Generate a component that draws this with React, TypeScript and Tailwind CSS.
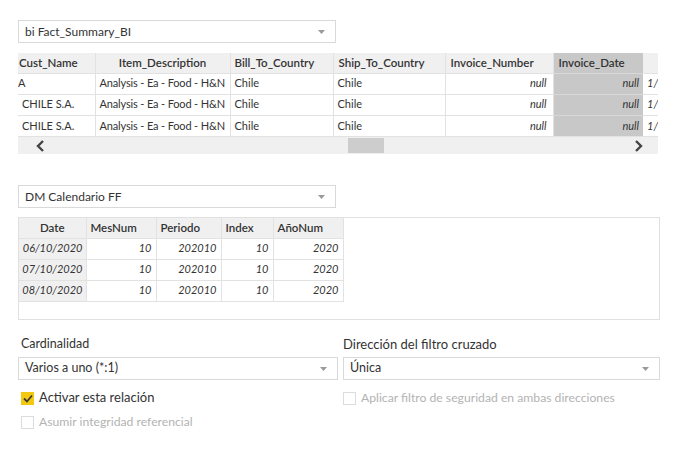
const font = { fontFamily: "Lato, 'Noto Sans', sans-serif" };

const Caret = () => (
  <svg width="7" height="4" viewBox="0 0 7 4" className="shrink-0">
    <path d="M0 0 L7 0 L3.5 4 Z" fill="#9a9a9a" />
  </svg>
);

const Select = ({ value, className }: { value: string; className: string }) => (
  <div
    className={`h-[23px] border border-[#d9d9d9] bg-white flex items-center justify-between pl-[6px] pr-[10px] text-[#333] ${className}`}
  >
    <span>{value}</span>
    <Caret />
  </div>
);

const Check = ({ checked, disabled, label }: { checked?: boolean; disabled?: boolean; label: string }) => (
  <div className="flex items-center gap-[5px] h-[16px]">
    {checked ? (
      <div className="w-[13px] h-[13px] bg-[#f2c811] flex items-center justify-center">
        <svg width="10" height="9" viewBox="0 0 10 9">
          <path d="M1 4.5 L4 7.5 L9 1.5" stroke="#3a3a3a" strokeWidth="1.8" fill="none" />
        </svg>
      </div>
    ) : (
      <div className="w-[13px] h-[13px] border border-[#dcdcdc] bg-white" />
    )}
    <span className={`${disabled ? "text-[#b3b3b3] text-[12.2px]" : "text-[#333] text-[13px]"}`}>{label}</span>
  </div>
);

const factCols = [77, 135, 103, 112, 108, 90, 15];

const factRows = [
  ["A", "Analysis - Ea - Food - H&N", "Chile", "Chile", "null", "null", "1/"],
  ["CHILE S.A.", "Analysis - Ea - Food - H&N", "Chile", "Chile", "null", "null", "1/"],
  ["CHILE S.A.", "Analysis - Ea - Food - H&N", "Chile", "Chile", "null", "null", "1/"],
];

const th = "bg-[#f0f0f0] border-r border-[#e2e2e2] font-semibold whitespace-nowrap overflow-hidden text-[11.5px]";

const FactTable = () => (
  <div className="w-[640px] overflow-hidden">
    <table className="w-[640px] table-fixed border-collapse text-[11px] text-[#333]">
      <colgroup>
        {factCols.map((w, i) => (
          <col key={i} style={{ width: w }} />
        ))}
      </colgroup>
      <thead>
        <tr className="h-[20px]">
          <th className={`${th} text-left pl-[1px]`}>Cust_Name</th>
          <th className={`${th} text-center`}>Item_Description</th>
          <th className={`${th} text-left pl-[4px]`}>Bill_To_Country</th>
          <th className={`${th} text-left pl-[5px]`}>Ship_To_Country</th>
          <th className={`${th} text-left pl-[5px]`}>Invoice_Number</th>
          <th className="bg-[#c8c8c8] font-semibold text-[11.5px] text-left pl-[5px] whitespace-nowrap">Invoice_Date</th>
          <th className="bg-[#f0f0f0]" />
        </tr>
      </thead>
      <tbody>
        {factRows.map((r, i) => (
          <tr key={i} className="h-[21px] border-t border-[#e2e2e2]">
            <td className={`border-r border-[#e2e2e2] whitespace-nowrap overflow-hidden ${i === 0 ? "pl-0" : "pl-[4px]"}`}>
              {r[0]}
            </td>
            <td className="border-r border-[#e2e2e2] pl-[4px] whitespace-nowrap overflow-hidden tracking-[-0.15px]">{r[1]}</td>
            <td className="border-r border-[#e2e2e2] pl-[4px]">{r[2]}</td>
            <td className="border-r border-[#e2e2e2] pl-[4px]">{r[3]}</td>
            <td className="border-r border-[#e2e2e2] pr-[6px] text-right italic">{r[4]}</td>
            <td className="bg-[#c8c8c8] pr-[4px] text-right italic border-t border-[#d8d8d8]">{r[5]}</td>
            <td className="pl-[4px] italic whitespace-nowrap overflow-hidden">{r[6]}</td>
          </tr>
        ))}
      </tbody>
    </table>
    <div className="h-[18px] bg-[#f0f0f0] border-t border-[#e2e2e2] flex items-center pl-[17px] pr-[14px]">
      <svg width="10" height="12" viewBox="0 0 10 12">
        <path d="M8 1 L3 6 L8 11" stroke="#444" strokeWidth="2.4" fill="none" />
      </svg>
      <div className="ml-[303px] w-[36px] h-[15px] bg-[#cdcdcd]" />
      <div className="flex-1" />
      <svg width="10" height="12" viewBox="0 0 10 12">
        <path d="M2 1 L7 6 L2 11" stroke="#444" strokeWidth="2.4" fill="none" />
      </svg>
    </div>
  </div>
);

const calCols = [
  { name: "Date", w: 67 },
  { name: "MesNum", w: 70 },
  { name: "Periodo", w: 65 },
  { name: "Index", w: 52 },
  { name: "AñoNum", w: 70 },
];

const calRows = [
  ["06/10/2020", "10", "202010", "10", "2020"],
  ["07/10/2020", "10", "202010", "10", "2020"],
  ["08/10/2020", "10", "202010", "10", "2020"],
];

const CalTable = () => (
  <div className="w-[642px] h-[103px] border border-[#e0e0e0]">
    <table className="w-[324px] table-fixed border-collapse text-[11px] text-[#333]">
      <colgroup>
        {calCols.map((c, i) => (
          <col key={i} style={{ width: c.w }} />
        ))}
      </colgroup>
      <thead>
        <tr className="h-[20px]">
          {calCols.map((c, i) => (
            <th key={i} className={`${th} ${i === 0 ? "text-center" : "text-left pl-[4px]"}`}>
              {c.name}
            </th>
          ))}
        </tr>
      </thead>
      <tbody>
        {calRows.map((r, i) => (
          <tr key={i} className="h-[21px] border-t border-b border-[#e2e2e2]">
            <td className="bg-[#f0f0f0] border-r border-[#e2e2e2] italic text-right pr-[3px]">{r[0]}</td>
            {r.slice(1).map((v, j) => (
              <td key={j} className="border-r border-[#e2e2e2] italic text-right pr-[4px]">
                {v}
              </td>
            ))}
          </tr>
        ))}
      </tbody>
    </table>
  </div>
);

export default function App() {
  return (
    <div className="w-[675px] h-[450px] bg-white" style={font}>
      <div className="pl-[18px] pt-[20px]">
        <Select value="bi Fact_Summary_BI" className="w-[318px] text-[12px]" />
        <div className="mt-[10px]">
          <FactTable />
        </div>
        <Select value="DM Calendario FF" className="w-[318px] mt-[31px] text-[12px]" />
        <div className="mt-[9px]">
          <CalTable />
        </div>
        <div className="flex gap-[5px] mt-[15px]">
          <div className="w-[320px]">
            <div className="text-[12.5px] text-[#333] pl-[3px] h-[18px]">Cardinalidad</div>
            <Select value="Varios a uno (*:1)" className="w-[320px] mt-[4px] text-[12.5px]" />
            <div className="mt-[10px] pl-[3px] flex flex-col gap-[8px]">
              <Check checked label="Activar esta relación" />
              <Check disabled label="Asumir integridad referencial" />
            </div>
          </div>
          <div className="w-[317px]">
            <div className="text-[13px] text-[#333] h-[18px]">Dirección del filtro cruzado</div>
            <Select value="Única" className="w-[317px] mt-[4px] text-[12.5px]" />
            <div className="mt-[10px]">
              <Check disabled label="Aplicar filtro de seguridad en ambas direcciones" />
            </div>
          </div>
        </div>
      </div>
    </div>
  );
}
